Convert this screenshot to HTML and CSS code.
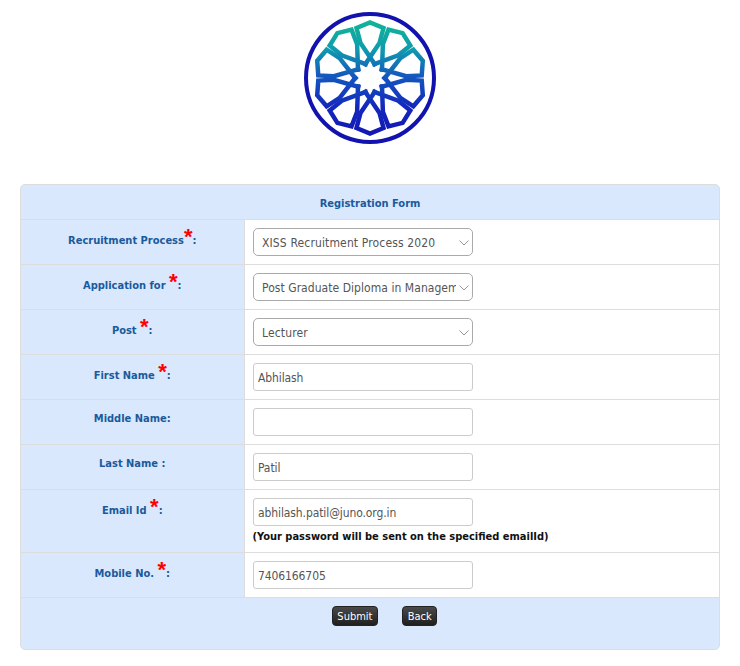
FILE: index.html
```html
<!DOCTYPE html>
<html lang="en">
<head>
<meta charset="utf-8">
<title>Registration Form</title>
<link rel="stylesheet" href="styles.css">
</head>
<body>
<div class="logo-wrap">
<svg class="logo" viewBox="-66 -66 132 132" width="132" height="132" aria-label="Logo">
  <defs>
    <linearGradient id="grad" gradientUnits="userSpaceOnUse" x1="0" y1="-58" x2="0" y2="58">
      <stop offset="0" stop-color="#12b596"/>
      <stop offset="0.25" stop-color="#0f9cae"/>
      <stop offset="0.48" stop-color="#1458bd"/>
      <stop offset="0.75" stop-color="#1328bd"/>
      <stop offset="1" stop-color="#1416b4"/>
    </linearGradient>
    <g id="petal">
      <path d="M-6,-12 L9.5,-35 L13.5,-50 L0,-55.5 L-13.5,-50 L-9.5,-35 L6,-12"/>
    </g>
    <mask id="lines" maskUnits="userSpaceOnUse" x="-66" y="-66" width="132" height="132">
      <g fill="none" stroke="#fff" stroke-width="4.5" stroke-linejoin="miter">
        <use href="#petal"/>
        <use href="#petal" transform="rotate(36)"/>
        <use href="#petal" transform="rotate(72)"/>
        <use href="#petal" transform="rotate(108)"/>
        <use href="#petal" transform="rotate(144)"/>
        <use href="#petal" transform="rotate(180)"/>
        <use href="#petal" transform="rotate(216)"/>
        <use href="#petal" transform="rotate(252)"/>
        <use href="#petal" transform="rotate(288)"/>
        <use href="#petal" transform="rotate(324)"/>
      </g>
    </mask>
  </defs>
  <rect x="-66" y="-66" width="132" height="132" fill="url(#grad)" mask="url(#lines)"/>
  <circle r="64" fill="none" stroke="#1212ae" stroke-width="4"/>
</svg>
</div>
<form class="card">
  <table class="form-table">
    <colgroup><col class="col-label"><col></colgroup>
    <tr><th colspan="2" class="title">Registration Form</th></tr>
    <tr>
      <td class="label">Recruitment Process<span class="req">*</span>:</td>
      <td class="field"><div class="select-wrap"><select class="control select"><option>XISS Recruitment Process 2020</option></select><svg class="chevron" viewBox="0 0 10 6" width="10" height="6"><path d="M0.5,0.5 L5,5 L9.5,0.5"/></svg></div></td>
    </tr>
    <tr>
      <td class="label">Application for <span class="req">*</span>:</td>
      <td class="field"><div class="select-wrap"><select class="control select select-long"><option>Post Graduate Diploma in Management</option></select><svg class="chevron" viewBox="0 0 10 6" width="10" height="6"><path d="M0.5,0.5 L5,5 L9.5,0.5"/></svg></div></td>
    </tr>
    <tr>
      <td class="label">Post <span class="req">*</span>:</td>
      <td class="field"><div class="select-wrap"><select class="control select"><option>Lecturer</option></select><svg class="chevron" viewBox="0 0 10 6" width="10" height="6"><path d="M0.5,0.5 L5,5 L9.5,0.5"/></svg></div></td>
    </tr>
    <tr>
      <td class="label">First Name <span class="req">*</span>:</td>
      <td class="field"><input class="control input" type="text" value="Abhilash"></td>
    </tr>
    <tr>
      <td class="label plain">Middle Name:</td>
      <td class="field"><input class="control input" type="text" value=""></td>
    </tr>
    <tr>
      <td class="label plain">Last Name :</td>
      <td class="field"><input class="control input" type="text" value="Patil"></td>
    </tr>
    <tr>
      <td class="label">Email Id <span class="req">*</span>:</td>
      <td class="field"><input class="control input" type="text" value="abhilash.patil@juno.org.in"><div class="note">(Your password will be sent on the specified emailId)</div></td>
    </tr>
    <tr>
      <td class="label">Mobile No. <span class="req">*</span>:</td>
      <td class="field"><input class="control input" type="text" value="7406166705"></td>
    </tr>
    <tr>
      <td colspan="2" class="actions">
        <button class="btn" type="button">Submit</button>
        <button class="btn" type="button">Back</button>
      </td>
    </tr>
  </table>
</form>
</body>
</html>
```

FILE: styles.css
```css
html, body { margin: 0; padding: 0; background: #fff; }
body { font-family: "DejaVu Sans", Verdana, sans-serif; font-stretch: condensed; font-size: 11px; }
.logo-wrap { display: flex; justify-content: center; padding-top: 12px; height: 184px; box-sizing: border-box; }
.logo { display: block; }
.card {
  display: block; margin: 0 20px; width: 700px; box-sizing: border-box;
  border: 1px solid #ddd; border-radius: 5px; background: #d9e8fd; overflow: hidden; height: 466px;
}
.form-table { border-collapse: collapse; width: 100%; table-layout: fixed; }
.col-label { width: 223px; }
.title {
  height: 32px; padding: 2px 0 0; color: #1a5a9c; font-size: 11px; font-weight: bold; text-align: center;
  border-bottom: 1px solid #ddd;
}
.label {
  padding: 10px 0 0; vertical-align: top; text-align: center;
  color: #1a5a9c; font-weight: bold; line-height: 18px; border-bottom: 1px solid #ddd;
}
.label.plain { padding-top: 10px; }
.field { background: #fff; padding: 8px 0 8px 8px; border-left: 1px solid #ddd; border-bottom: 1px solid #ddd; vertical-align: top; }
.req { color: #f00; font-size: 22px; line-height: 14px; font-weight: bold; font-family: "Liberation Sans", sans-serif; }
.control {
  display: block; box-sizing: border-box; width: 220px; height: 28px; margin: 0;
  font-family: "DejaVu Sans", Verdana, sans-serif; font-stretch: condensed; font-size: 12px; color: #555; background-color: #fff;
}
.select-wrap { position: relative; width: 220px; }
.select { appearance: none; border: 1px solid #aaa; border-radius: 5px; padding: 2px 16px 0 8.5px; letter-spacing: 0.14px; }
.select-long { letter-spacing: 0.05px; }
.chevron { position: absolute; right: 4px; top: 12px; fill: none; stroke: #888; stroke-width: 0.9; }
.input { border: 1px solid #ccc; border-radius: 3px; padding: 2px 4px 0 4.5px; outline: none; letter-spacing: -0.1px; }
.note { font-weight: bold; color: #111; margin-top: 3px; line-height: 15px; }
.actions { padding: 8px 0 0 29px; text-align: center; }
.btn {
  height: 20px; padding: 0 4.5px; margin: 0 10.5px; border: 1px solid #222; border-radius: 4px;
  background: linear-gradient(#4a4a4a, #1f1f1f); color: #fff; font-family: "DejaVu Sans", Verdana, sans-serif; font-stretch: condensed; font-size: 11px;
}
```
